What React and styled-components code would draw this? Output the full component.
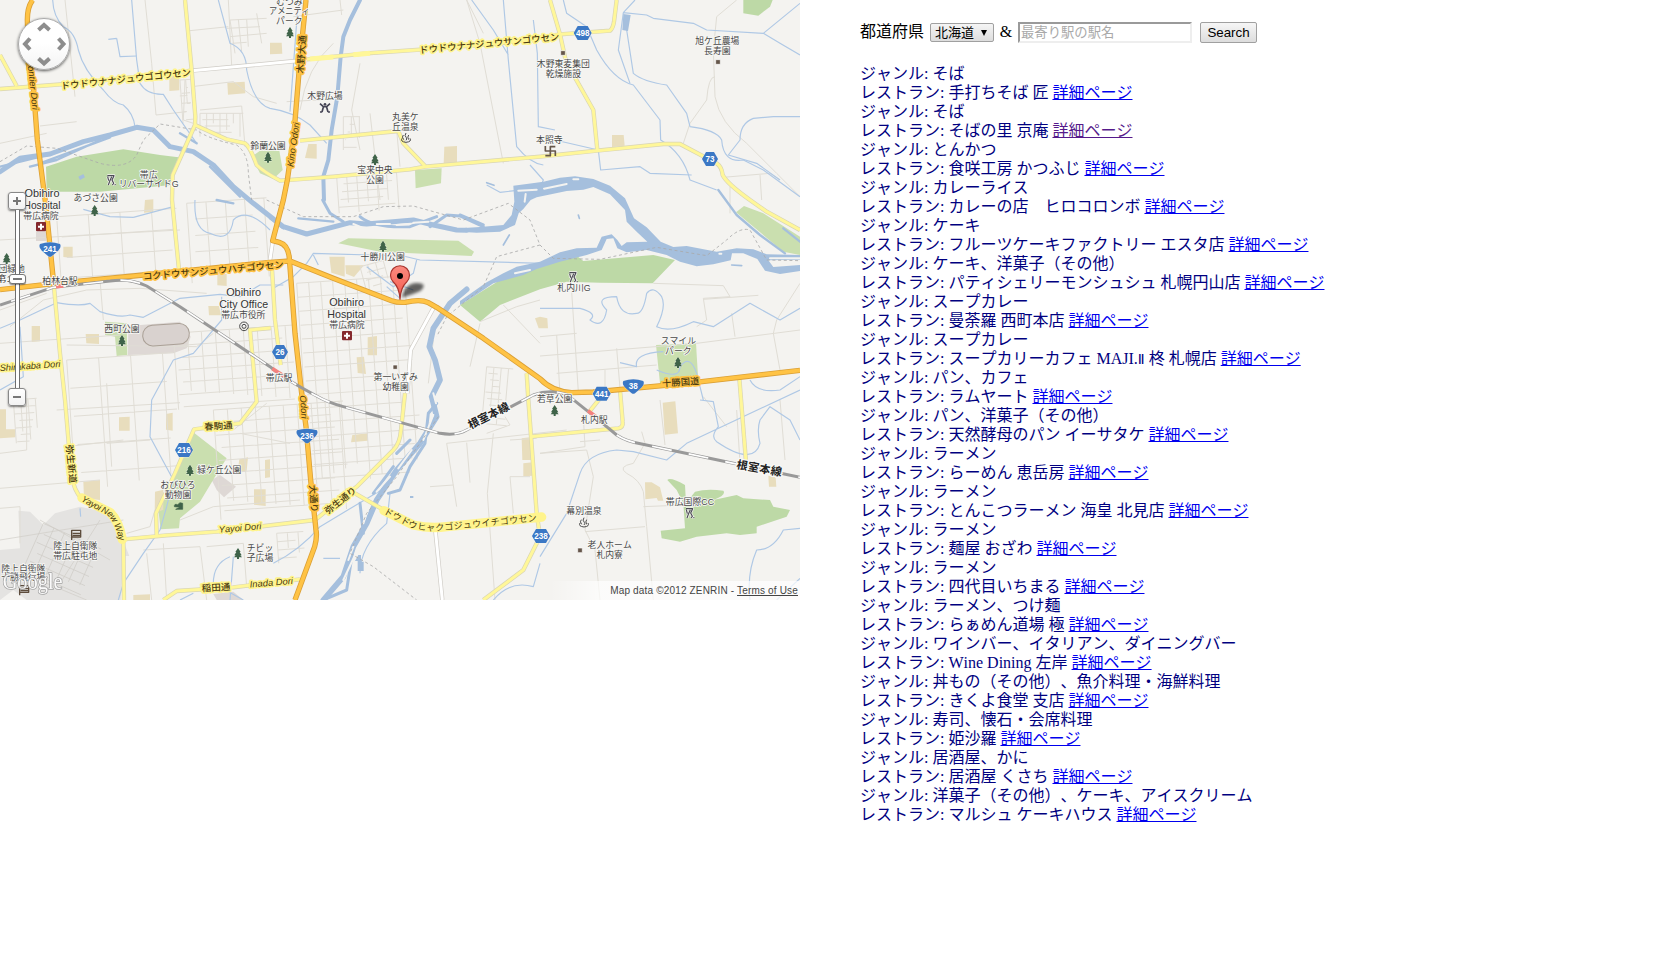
import React from "react";
import styled, { createGlobalStyle } from "styled-components";

const GlobalStyle = createGlobalStyle`
  body { margin: 0; background: #fff; }
`;
const Page = styled.main`
  display: flex;
  align-items: flex-start;
  gap: 60px;
  font: 16px/19px "Liberation Serif", "Noto Sans CJK JP", serif;
  font-kerning: none;
  text-spacing-trim: space-all;
  color: #000;
`;
const MapPane = styled.section`
  position: relative;
  flex: none;
  width: 800px;
  height: 600px;
  overflow: hidden;
  background: #f4f3f0;
`;
const MapSvg = styled.svg`
  display: block;
  font-family: "Liberation Sans", "Noto Sans CJK JP", sans-serif;
`;
const PanControl = styled.div`
  position: absolute;
  left: 18px;
  top: 18px;
  width: 50px;
  height: 50px;
  border: 1px solid #aaa;
  border-radius: 50%;
  background: linear-gradient(#fff 50%, #f3f3f3);
  box-shadow: 0 1px 3px rgba(0, 0, 0, 0.65);
`;
const ZoomControl = styled.div`
  position: absolute;
  left: 8px;
  top: 192px;
  display: flex;
  flex-direction: column;
  align-items: center;
  width: 18px;
`;
const ZoomButton = styled.div`
  display: grid;
  place-items: center;
  box-sizing: border-box;
  width: 18px;
  height: 18px;
  border: 1px solid #888;
  border-radius: 3px;
  background: linear-gradient(#fff, #f2f2f2);
  box-shadow: 0 1px 2px rgba(0, 0, 0, 0.5);
`;
const ZoomTrack = styled.div`
  display: flex;
  justify-content: center;
  box-sizing: border-box;
  width: 5px;
  height: 178px;
  padding-top: 64px;
  border: solid #6e6e6e;
  border-width: 0 1px;
  background: #fff;
`;
const ZoomHandle = styled.div`
  flex: none;
  display: grid;
  place-items: center;
  box-sizing: border-box;
  width: 17px;
  height: 10px;
  border: 1px solid #777;
  border-radius: 3px;
  background: #fff;
  box-shadow: 0 1px 1px rgba(0, 0, 0, 0.4);
`;
const Attribution = styled.div`
  position: absolute;
  right: 0;
  bottom: 0;
  box-sizing: border-box;
  width: 250px;
  height: 19px;
  padding-right: 2px;
  text-align: right;
  white-space: nowrap;
  font: 10px/19px "Liberation Sans", sans-serif;
  letter-spacing: 0.17px;
  color: #444;
  background: linear-gradient(to right, rgba(255, 255, 255, 0), rgba(255, 255, 255, 0.7) 50px);
`;
const Terms = styled.a`
  color: #444;
  text-decoration: underline;
`;
const Panel = styled.section`
  padding-top: 22px;
`;
const SearchBar = styled.form`
  display: flex;
  align-items: center;
  height: 21px;
  margin-bottom: 21px;
`;
const FieldName = styled.span`
  width: 70px;
  padding-bottom: 2px;
`;
const Prefecture = styled.button`
  display: flex;
  align-items: center;
  justify-content: space-between;
  box-sizing: border-box;
  width: 64px;
  height: 19px;
  padding: 0 6px 0 4px;
  border: 1px solid #a0a0a0;
  border-radius: 2px;
  background: linear-gradient(#f5f5f5, #ddd);
  font: 13px/17px "Liberation Sans", "Noto Sans CJK JP", sans-serif;
  color: #000;
`;
const Amp = styled.span`
  width: 24px;
  padding-bottom: 2px;
  text-align: center;
`;
const StationInput = styled.input`
  box-sizing: border-box;
  width: 174px;
  height: 21px;
  margin: 0 8px 0 0;
  padding: 1px;
  border: 2px solid;
  border-color: #9a9a9a #eee #eee #9a9a9a;
  outline: none;
  background: #fff;
  font: 13.33px "Liberation Sans", "Noto Sans CJK JP", sans-serif;
  &::placeholder { color: #a9a9a9; opacity: 1; }
`;
const SearchButton = styled.button`
  box-sizing: border-box;
  width: 57px;
  height: 21px;
  padding: 0;
  border: 1px solid #a0a0a0;
  border-radius: 2px;
  background: linear-gradient(#f6f6f6, #ddd);
  font: 13.33px "Liberation Sans", sans-serif;
  color: #000;
`;
const Results = styled.div`
  color: #000080;
`;
const Line = styled.div`
  height: 19px;
  white-space: pre;
`;
const Numeral = styled.span`
  font: 14px/1 "DejaVu Sans", sans-serif;
`;
const Detail = styled.a`
  color: ${(p) => (p.$visited ? "#551a8b" : "#0000ee")};
  text-decoration: underline;
`;

const restaurants = [
  ["そば", "手打ちそば 匠"],
  ["そば", "そばの里 京庵", true],
  ["とんかつ", "食咲工房 かつふじ"],
  ["カレーライス", "カレーの店　ヒロコロンボ"],
  ["ケーキ", "フルーツケーキファクトリー エスタ店"],
  ["ケーキ、洋菓子（その他）", "パティシェリーモンシュシュ 札幌円山店"],
  ["スープカレー", "曼荼羅 西町本店"],
  ["スープカレー", <>スープカリーカフェ MAJI.<Numeral>Ⅱ</Numeral> 柊 札幌店</>],
  ["パン、カフェ", "ラムヤート"],
  ["パン、洋菓子（その他）", "天然酵母のパン イーサタケ"],
  ["ラーメン", "らーめん 恵岳房"],
  ["ラーメン", "とんこつラーメン 海皇 北見店"],
  ["ラーメン", "麺屋 おざわ"],
  ["ラーメン", "四代目いちまる"],
  ["ラーメン、つけ麺", "らぁめん道場 極"],
  ["ワインバー、イタリアン、ダイニングバー", "Wine Dining 左岸"],
  ["丼もの（その他）、魚介料理・海鮮料理", "きくよ食堂 支店"],
  ["寿司、懐石・会席料理", "姫沙羅"],
  ["居酒屋、かに", "居酒屋 くさち"],
  ["洋菓子（その他）、ケーキ、アイスクリーム", "マルシュ ケーキハウス"],
];

/* Map geometry is kept in thirds of a pixel: 2400 x 1800 units. */
const motorways = [
  "M98 0Q82 20 82 60L86 200L100 260L112 420L138 620L150 740L161 850",
  "M0 869L160 851L400 828L810 787L870 783L1000 835L1175 902Q1192 908 1215 907Q1262 896 1285 908L1310 922L1450 1015L1620 1136Q1655 1174 1715 1178L1780 1176L2060 1150L2400 1111",
  "M918 0L900 180L882 400L862 540L850 600L818 722L838 727Q865 735 868 775L885 1000L905 1180L918 1280L932 1440L948 1590Q952 1610 944 1640L885 1800",
];
const yellowRoads = [
  "M555 0L575 210L586 350L585 375L518 525L516 600L537 810",
  "M0 267L250 248L575 212",
  "M920 178L980 172L1100 160L1260 149L1500 130L1680 103L1750 98L1830 92Q1839 85 1842 65L1850 0",
  "M1650 0L1680 103L1698 185L1780 330L1792 450",
  "M900 422L1195 393L1210 430L1275 498",
  "M585 375L680 418L735 430Q750 440 770 495Q790 515 840 542L1000 530L1230 508L1275 500L1620 470L1790 452L1990 432L2040 432L2150 490Q2165 500 2168 525Q2180 550 2250 600L2300 635L2400 690",
  "M0 165L50 258",
  "M815 790L825 960L842 1095",
  "M812 984L750 990L770 1205L720 1270L582 1288L525 1420L468 1540L470 1605",
  "M161 850L180 1060L195 1200L207 1340L220 1450Q230 1485 255 1505L345 1545L370 1618L372 1800",
  "M370 1618L500 1606L650 1595L945 1560L1070 1460L1180 1350Q1200 1330 1203 1290L1215 1180",
  "M1065 1480L1160 1535L1240 1577L1310 1582L1450 1572L1620 1550",
  "M1580 1120L1585 1200L1610 1540L1620 1610L1570 1710L1450 1800",
  "M1590 1310L1855 1285Q1870 1282 1868 1265L1860 1170",
  "M2218 1135L2238 1385",
  "M490 1800L530 1773L700 1762L900 1738",
  "M0 1108L180 1090",
  "M1800 1195L1768 1235",
];
const streets = [
  "M195 0L220 240L225 290M435 0L455 190L468 345L560 335M570 92L685 80M685 0L695 195M575 260L700 245L760 290L830 310",
  "M0 430L140 400M120 378L230 365M555 240L550 360L580 370M545 280L570 278M545 310L573 308M725 318L735 440M600 330L725 318",
  "M690 60L800 55M680 85L780 80M690 110L800 100M695 130L740 127M690 60L705 160M715 58L725 155M740 58L745 140M770 40L785 130",
  "M1030 30L880 50M1025 45L1020 0M1400 0L1450 100M1400 0L1440 130L1510 490M1190 390L1200 500M1110 340L1140 600M1080 190L1055 330L1080 450M860 305L990 298M1000 130Q920 200 900 330",
  "M2210 0L2150 50L2140 150L2145 290Q2160 370 2240 430L2330 520L2400 590M2145 230Q2125 230 2120 300L2070 370L2050 430M2170 532L2310 520L2340 540M2280 525L2285 600",
  "M950 1500L940 1600M1285 1150L1300 1020M1460 1300L1530 1275L1515 1250M1485 1800L1462 1480L1480 1300M1370 1520L1340 1330L1700 1290M1400 1328L1410 1448M1290 1460L1360 1455",
  "M1530 1320L1610 1315M1540 1540L1530 1430L1590 1430M1620 1360L1760 1350L1780 1430L1755 1590L1785 1650L1800 1800M1750 1250L1755 1340L1620 1360M1740 1325L1800 1320M1755 1595L1935 1580",
  "M1925 1295L1935 1330L1900 1390Q1850 1400 1880 1420Q1920 1440 1930 1475L1940 1580L1960 1800M1930 1520L2050 1515M1980 1200L1995 1335M2110 1190L2180 1280",
  "M1620 1010L1730 1000M1670 1005L1680 1185M1620 1068L2090 1030L2400 990M1670 1120L1970 1095M1715 875L1735 1175M1850 1045L1860 1165M1815 1110L1815 1170",
  "M1960 850L2170 857L2190 890L2110 895L2120 960L2090 980M2110 898L2275 886M2400 850L2330 960L2320 1000L2340 1110M2195 940L2205 1010",
  "M1440 965L1550 920L1620 900M1440 970L1410 1100M1510 915L1620 1030",
  "M0 1360L80 1350L80 1200M0 1465L300 1440M0 1525L60 1520L60 1630M2340 1200L2355 1380M2210 1230L2220 1390M2190 640L2190 560",
  "M30 980L130 900L260 870L420 865L620 880M0 930L140 880M0 1030L360 1005M300 840L310 960M200 1035L590 1040L640 1000",
  "M0 720L260 705L540 690M170 1230L540 1208M200 1340L370 1320M320 1150L335 1400M320 1330L450 1320M700 1290L800 1210M720 1300L870 1330",
  "M440 1660L455 1800M430 1650L600 1640L620 1800M620 1640L730 1630L740 1760M490 1630L500 1800M380 1600L450 1580L465 1530M540 1560L640 1520L900 1500",
];
const streams = [
  "M158 0Q160 50 190 80Q225 95 235 150Q250 210 310 270Q340 310 370 315Q400 340 405 380",
  "M395 0L410 180L420 250Q440 285 490 283L520 330L590 430",
  "M655 0L690 130Q740 150 740 210Q760 310 810 325Q880 335 930 375L980 430",
  "M350 115L360 170L410 168M350 115L325 118",
  "M895 0L870 335",
  "M1415 0L1480 90L1525 165M1510 0L1525 180L1550 440Q1590 490 1630 495M1600 60L1612 160L1615 380L1665 390",
  "M1690 0L1700 40L1760 80L1790 150Q1840 240 1900 255L1980 360L1982 420Q2050 460 2070 540L2150 570",
  "M1880 90L1900 220Q1930 245 2000 255L2060 340L2070 380Q2150 390 2165 420Q2170 490 2230 480L2290 510L2400 590",
  "M1870 38L1940 45L1960 55L2080 70L2120 90L2290 100L2400 10M2290 100L2340 130L2400 165M1870 38L1855 150L1890 250M1870 38L1905 0",
  "M2400 350L2320 350L2260 355Q2220 370 2220 420L2185 465L2270 490L2340 540M1665 420L1795 450L1802 510L1920 500L1950 520L2075 525",
  "M585 600Q580 690 630 700Q690 730 700 660Q740 620 810 690M400 652L330 650L250 628M520 620L400 652",
  "M0 985L60 960L170 908Q240 920 270 910L300 935Q360 955 390 945L430 952L540 895L660 883L720 890L780 855L850 855M60 980L70 1130L0 1170",
  "M665 890L665 960L580 1060L520 1080L455 1200L450 1310L520 1440L500 1520L480 1590L430 1660L370 1750L355 1800",
  "M730 1800L640 1750Q640 1690 690 1670M700 1670L690 1800M820 1690Q900 1650 960 1580L1110 1490L1160 1460",
  "M820 865L880 830L920 790L940 760L1210 768L1260 780L1630 790M940 765L955 795M1170 845L1240 870M1250 780L1240 820L1180 860L1100 800M1160 860L1200 895",
  "M1620 925L1740 925Q1795 940 1770 960Q1810 990 1820 930Q1780 890 1850 890Q1860 950 1910 940Q1930 940 1940 880Q1960 855 1985 890Q2000 920 1970 980Q2010 1000 2080 965L2140 980L2250 910L2340 960L2400 925",
  "M1860 1088L1910 1100Q1900 1060 1990 1055M1970 1110Q2040 1140 2040 1100Q2070 1060 2090 1120L2110 1200M2250 1140Q2270 1180 2340 1170L2400 1130",
  "M1620 1670L1700 1540L1740 1420Q1760 1360 1850 1350L1900 1355L2000 1380L2060 1330L2400 1170M2100 1200L2140 1205L2155 1280Q2130 1310 2150 1325Q2260 1400 2280 1330Q2270 1290 2280 1260L2310 1220L2370 1260L2400 1320",
  "M2400 1585L2350 1590Q2320 1650 2270 1650Q2240 1720 2250 1800M2400 1735L2330 1800M1620 1690L1600 1760Q1530 1740 1480 1800",
  "M1170 1480L1160 1570Q1080 1640 1080 1720M970 1675L1020 1675M540 1800L580 1780M240 1525L242 1550",
  "M1590 495L1630 540L1622 560M1460 555L1500 577L1545 572",
];
const rivers = [
  ["M0 515L60 475L150 462L250 425L330 405L410 382L460 390L510 440L580 455L640 495L700 560L760 610L850 680L920 702L1050 668L1100 672L1240 660L1300 675L1370 690L1400 691", 15],
  ["M0 500L140 465M90 500L170 480L300 420M120 490L330 412M630 500L720 590M540 400L590 430M650 600L700 610M810 655L850 685M895 655L1000 665", 7],
  ["M1080 0L1050 60L1030 110L1022 170L1012 290L995 390L985 480L970 530L972 600", 12],
  ["M1400 868L1350 910L1300 985L1288 1040L1305 1080L1320 1140L1295 1190L1310 1250L1260 1330L1190 1410L1130 1500L1100 1570L1060 1640L1030 1730L970 1800", 17],
  ["M1310 1210L1285 1240L1275 1330L1230 1400L1200 1470L1165 1480M1230 1320L1190 1360M1080 1510L1090 1600M1060 1640L1040 1770L970 1800M1180 1400L1120 1480", 9],
  ["M1080 650Q1120 685 1230 680L1310 650M1290 680L1340 645L1380 648L1450 680M968 600L990 640L1030 665M1380 645L1450 675", 9],
  ["M2155 570L2210 645L2280 705L2355 760M2350 685L2400 725", 7],
  ["M1460 548L1482 556M2195 795L2225 797M1735 645L1738 655M1510 735L1528 705", 5],
];
const braid = "M160 62L200 57L250 50L300 38L345 34L400 42L450 62L495 100L522 160L560 187L602 230L640 246L680 243L770 260L830 250L880 253L920 268L1022 270V284L925 286L940 306L1022 300V318L960 327L915 317L892 282L850 265H816L812 286L760 298L710 304L660 290L620 270L560 255L500 262L472 250L460 220L440 222L425 255L380 270L300 290L230 312L190 330L100 355L40 395L0 420V408L80 352L130 325L170 305L240 290L300 262L350 250L410 248L425 215L455 208L472 225L485 243L500 232L562 230L530 200L500 170L495 135L450 88L400 66L370 74L320 78L230 97L212 105L190 132L176 145L165 180L120 200L50 203L0 200V190L60 186L130 180L155 150L163 110Z";
const islands = "M1130 672L1170 672M1190 675L1230 672M1240 668L1285 665M1060 672L1085 682M1300 1245L1270 1320M1235 1350L1195 1405M1170 1430L1130 1475M1110 1510L1090 1570M1060 1640L1045 1680M2158 761L2164 761M1300 1180L1308 1210M1065 1665L1030 1740M1632 566L1700 552M1577 582L1574 605M1720 538L1735 538M1545 820L1590 810M2310 775L2400 775M1555 572L1610 569";

const greens = [
  ["M138 500L230 470L370 448L480 465L535 472L512 530L515 555L300 575L140 575Z", 0],
  ["M755 470L780 452L838 452L848 510L820 537L780 520Z", 1],
  ["M1245 510L1325 505L1323 550L1247 565Z", 1],
  ["M2230 0L2318 0L2310 20L2275 47L2230 40Z", 0],
  ["M1015 730L1045 715L1375 722L1422 755L1415 768L1140 755Z", 1],
  ["M1380 915L1500 840L1620 800L1730 767L1750 783L1960 765L2025 780L1958 850L1800 848L1700 845L1620 868L1500 915L1440 965Z", 0],
  ["M1968 1035L2088 1030L2095 1145L1980 1150Z", 1],
  ["M2208 637L2232 618L2290 640L2400 710L2400 765L2350 755Z", 1],
  ["M580 1297L680 1375L645 1430L600 1505L540 1555L537 1585L482 1588L475 1530Z", 1],
  ["M315 965L380 970L382 1065L350 1068L345 1010L315 1005Z", 1],
  ["M2002 1440Q2010 1430 2055 1455L2058 1510L2085 1475Q2120 1465 2170 1472Q2180 1485 2140 1500L2210 1485L2230 1495L2310 1500L2320 1520L2370 1530L2360 1550L2270 1580L2270 1600L2220 1605L2180 1600L2090 1610L2040 1625L1985 1615L1982 1592L2055 1585L2050 1510L2030 1470Z", 0],
];
const tanBlocks = [
  "M508 228l30 -2l0 45l-30 2z", "M682 248l52 -3l2 35l-52 4z", "M810 128l35 0l2 33l-37 2z", "M925 432l25 0l0 44l-35 -2z",
  "M1333 440l38 -2l0 50l-40 2z", "M1836 405l35 0l3 32l-38 4z", "M190 740l28 0l0 34l-28 -3z", "M435 600l25 -2l0 38l-28 2z", "M652 822l28 0l0 36l-28 -2z",
  "M625 918l32 0l6 28l-36 0z", "M95 978l25 0l0 46l-25 2z", "M257 1002l40 0l0 30l-38 -2z", "M988 770l46 0l0 60l-40 -12z", "M1036 796l56 0l-30 35l-24 -10z",
  "M1103 1012l28 -4l0 58l-28 0z", "M1070 1072l22 -2l6 52l-25 -3z", "M1605 955l15 -5l22 5l2 30l-28 0z", "M0 1228l18 0l0 60l28 0l0 24l-46 3z",
  "M357 1252l32 -2l0 42l-32 0z", "M498 1242l20 -4l0 54l-20 -3z", "M250 1445l50 -5l0 60l-48 -5z", "M465 1475l25 -6l0 60l-26 10z", "M718 1378l26 -6l-4 40l-28 8z",
  "M762 1468l35 0l0 50l-35 -4z", "M1057 1305l46 -5l0 22l-50 5z", "M1565 1315l25 -3l5 68l-28 0z", "M1570 1390l28 -3l2 40l-30 2z", "M1988 1208l38 -4l8 96l-40 4z",
  "M1935 1447l20 0l25 15l10 40l-16 0l-4 -8l-34 4z", "M2305 1427l22 5l2 28l-22 0z", "M400 1785l50 -2l0 17l-50 0z", "M795 1380l15 -2l0 54l-15 2z",
];

const roadNames = [
  ["ドウドウナナジュウゴゴウセン", 378, 238, -6, 392, "y"],
  ["ドウドウナナジュウサンゴウセン", 1468, 131, -5.5, 422, "y"],
  ["コクドウサンジュウハチゴウセン", 640, 812, -5, 424, "o"],
  ["木野大通", 905, 163, -86, 116, "o"],
  ["Kino Odori", 880, 434, -82, 135, "oi"],
  ["Frontier Dori", 98, 250, 84, 160, "oi"],
  ["Odori", 911, 1221, 86, 70, "oi"],
  ["大通り", 940, 1496, 85, 82, "o"],
  ["弥生新道", 213, 1392, 84, 116, "y"],
  ["弥生通り", 1022, 1502, -38, 112, "y"],
  ["春駒通", 655, 1279, -3, 86, "y"],
  ["Shirakaba Dori", 90, 1098, -4, 182, "yi"],
  ["Yayoi Dori", 720, 1584, -5, 128, "yi"],
  ["稲田通", 648, 1763, -3, 86, "y"],
  ["Inada Dori", 814, 1748, -5, 130, "yi"],
  ["十勝国道", 2042, 1147, -4, 112, "o"],
];
const places = [
  ["むつみ", 868, 6], ["アメニティ", 868, 34, 122], ["パーク", 868, 62],
  ["鈴蘭公園", 804, 437], ["木野広場", 975, 288], ["丸美ケ", 1216, 351], ["丘温泉", 1216, 381],
  ["宝来中央", 1125, 510], ["公園", 1125, 540], ["木野東麦集団", 1690, 191], ["乾燥施設", 1690, 221],
  ["旭ケ丘農場", 2152, 123], ["長寿園", 2152, 153], ["本照寺", 1648, 420], ["帯広", 446, 524],
  ["リバーサイドG", 446, 551, 180], ["あづさ公園", 287, 594], ["帯広病院", 123, 648],
  ["団緑地", 35, 808], ["第1", 12, 838], ["柏林台駅", 180, 843], ["帯広市役所", 730, 944],
  ["西町公園", 366, 987], ["十勝川公園", 1148, 771], ["帯広病院", 1041, 974], ["帯広駅", 837, 1133],
  ["第一いずみ", 1187, 1132], ["幼稚園", 1187, 1161], ["札内川G", 1722, 864, 100], ["スマイル", 2035, 1022],
  ["パーク", 2035, 1052], ["若草公園", 1664, 1198], ["札内駅", 1783, 1260], ["緑ケ丘公園", 658, 1411],
  ["おびひろ", 534, 1455], ["動物園", 534, 1485], ["陸上自衛隊", 226, 1638], ["帯広駐屯地", 226, 1668],
  ["陸上自衛隊", 70, 1707], ["十勝飛行場", 70, 1732], ["チビッ", 780, 1645], ["子広場", 780, 1674],
  ["幕別温泉", 1752, 1533], ["老人ホーム", 1829, 1635], ["札内寮", 1829, 1664], ["帯広国際CC", 2070, 1506, 145],
];
const englishPlaces = [
  ["Obihiro", 126, 578, 105], ["Hospital", 126, 616, 111], ["Obihiro", 731, 877, 105],
  ["City Office", 731, 913, 147], ["Obihiro", 1040, 907, 105], ["Hospital", 1040, 943, 116],
];
const trees = [[870, 97], [804, 471], [1125, 478], [284, 631], [20, 775], [366, 1021], [1149, 738], [2034, 1087], [1664, 1231], [570, 1410], [714, 1660]];

const Tree = ({ x, y }) => (
  <path transform={`translate(${x} ${y})`} d="M0 -16L8 -4H5L11 6H7L12 12H3V17H-3V12H-12L-7 6H-11L-5 -4H-8Z" fill="#3f6349" stroke="#f4f3f0" strokeWidth="1.5" paintOrder="stroke" />
);
const Golf = ({ x, y }) => (
  <g transform={`translate(${x} ${y})`} fill="none" stroke="#f4f3f0" strokeWidth="8">
    <path d="M-12 -13H8L2 0L7 10L3 15M1 -10L-5 4L-9 15M10 14h3M-11 -10L-8 2" />
    <path d="M-12 -13H8L2 0L7 10L3 15M1 -10L-5 4L-9 15M10 14h3M-11 -10L-8 2" stroke="#4c4c55" strokeWidth="3.5" />
  </g>
);
const HotSpring = ({ x, y }) => (
  <g transform={`translate(${x} ${y})`} fill="none" stroke="#4c4c4c" strokeWidth="3">
    <path d="M-8 -8Q-14 -2 -7 6M0 -14Q-6 -6 1 0Q4 4 0 8M8 -8Q3 -2 8 6M-12 2Q-18 12 0 14Q18 12 12 2" />
  </g>
);
const Cross = ({ x, y }) => (
  <g transform={`translate(${x} ${y})`}>
    <rect x="-15" y="-14" width="30" height="28" rx="3" fill="#85292d" />
    <path d="M-9 0H9M0 -9V9" stroke="#fff" strokeWidth="6" />
  </g>
);
const Flag = ({ x, y }) => (
  <path transform={`translate(${x} ${y})`} d="M-13 16V-13H14V7H-13M-10 -4H12M-10 2H12" fill="none" stroke="#5d4c3c" strokeWidth="4" />
);
const Shield = ({ x, y, n, national }) => (
  <g transform={`translate(${x} ${y})`}>
    <path
      d={national ? "M-30 -16Q0 -26 30 -16Q36 -6 20 8L5 21Q0 24 -5 21L-20 8Q-36 -6 -30 -16Z" : n.length > 2 ? "M-15 -21H15L27 0L15 21H-15L-27 0Z" : "M-12 -21H12L24 0L12 21H-12L-24 0Z"}
      fill="#3b78c5" stroke="#f4f3f0" strokeWidth="2" paintOrder="stroke"
    />
    <text y="9" textAnchor="middle" fontSize="27" fontWeight="bold" fill="#fff" textLength={n.length * 13.5} lengthAdjust="spacingAndGlyphs">{n}</text>
  </g>
);

/* Regular blocks of the central town, slightly tilted west. */
function TownGrid({ x, y, w, h, dx, dy, angle = -4 }) {
  const d = [];
  for (let i = 0; i <= w; i += dx) d.push(`M${i} 0V${h - ((i * 7) % 60)}`);
  for (let j = 0; j <= h; j += dy) d.push(`M${(j * 3) % 25} ${j}H${w - ((j * 5) % 50)}`);
  return <path transform={`translate(${x} ${y}) rotate(${angle})`} d={d.join("")} />;
}

const railway = "M0 915L160 862L330 843Q390 834 440 858L540 920L810 1100Q850 1135 950 1188Q980 1206 1030 1220L1320 1300Q1370 1308 1400 1290L1600 1185Q1650 1166 1700 1183L1790 1255L1850 1305Q1880 1325 1925 1332L2200 1390L2400 1432";

function CityMap() {
  return (
    <MapSvg width="800" height="600" viewBox="0 0 2400 1800" strokeLinejoin="round">
      <defs>
        <path id="new-way" d="M242 1502Q290 1530 322 1545Q348 1572 358 1625" />
        <path id="hyaku" d="M1150 1540L1235 1584Q1290 1597 1340 1590L1450 1579L1630 1561" />
        <filter id="soft"><feGaussianBlur stdDeviation="5" /></filter>
        <linearGradient id="pin" x2="0" y2="1"><stop stopColor="#fb8b80" /><stop offset="1" stopColor="#f5594d" /></linearGradient>
      </defs>
      <path d="M55 1532L90 1535L130 1575L165 1540L240 1520L310 1535L345 1560L368 1618L388 1668H370L362 1800H0V1650L60 1645Z" fill="#e4e3e1" />
      <path d="M0 1800L40 1770L80 1800Z" fill="#f4f3f0" />
      <g fill="#ded8d5">
        <path d="M385 978L540 965L572 1010L560 1045L520 1060L384 1065Z" />
        <path d="M635 1440L660 1425L708 1460L672 1492L650 1470Z" /><path d="M108 695h30v28h-30z" />
        <path d="M640 1782L700 1775L730 1800H650Z" />
      </g>
      {greens.map(([d, light]) => <path key={d} d={d} fill={light ? "#cadfaf" : "#bdd9a6"} />)}
      <g fill="#e8ddbd">{tanBlocks.map((d) => <path key={d} d={d} />)}</g>
      <g fill="none" stroke="#e0ddd5" strokeWidth="3">
        {streets.map((d) => <path key={d} d={d} />)}
        <TownGrid x={890} y={850} w={340} h={600} dx={36} dy={42} />
        <TownGrid x={520} y={1000} w={360} h={230} dx={42} dy={37} />
        <TownGrid x={640} y={1230} w={390} h={330} dx={42} dy={38} />
        <TownGrid x={200} y={1080} w={320} h={400} dx={96} dy={85} />
        <TownGrid x={560} y={610} w={240} h={240} dx={58} dy={49} />
        <TownGrid x={170} y={650} w={360} h={200} dx={95} dy={62} />
        <TownGrid x={1460} y={1100} w={80} h={180} dx={22} dy={19} angle={5} />
        <TownGrid x={1010} y={530} w={180} h={110} dx={30} dy={23} />
        <TownGrid x={1030} y={350} w={50} h={100} dx={24} dy={23} angle={0} />
        <TownGrid x={600} y={340} w={130} h={70} dx={20} dy={19} angle={0} />
        <TownGrid x={540} y={240} w={36} h={130} dx={17} dy={24} />
        <TownGrid x={1080} y={800} w={80} h={80} dx={24} dy={22} angle={-15} />
        <TownGrid x={40} y={1200} w={70} h={130} dx={22} dy={21} />
        <TownGrid x={830} y={1600} w={80} h={90} dx={32} dy={25} />
      </g>
      <g fill="none" stroke="#cfccc6" strokeWidth="2">
        <TownGrid x={130} y={1570} w={190} h={150} dx={35} dy={30} angle={24} />
        <path d="M0 1620L370 1560M20 1700L260 1800M120 1560L330 1680M300 1560L180 1750" />
      </g>
      <rect x="428" y="973" width="140" height="62" rx="30" fill="#d9d2cf" stroke="#aaa096" strokeWidth="3" transform="rotate(-4 498 1004)" />
      <g fill="none" stroke="#afc8e5" strokeWidth="3.5">{streams.map((d) => <path key={d} d={d} />)}</g>
      <g fill="none" stroke="#a5bfdd" strokeLinecap="round">
        {rivers.map(([d, w]) => <path key={d} d={d} strokeWidth={w} />)}
      </g>
      <path d={braid} transform="translate(1380 495)" fill="#a5bfdd" />
      <path d={islands} fill="none" stroke="#f4f3f0" strokeWidth="6" strokeLinecap="round" />
      <path d="M1870 42L1892 45L1884 93L1867 90ZM235 530L250 522L255 532L240 540ZM1075 1665h8v20h8v28h-18v-30h-8zM1230 1488h10v6h-10z" fill="#a5bfdd" />
      <path d="M0 485L80 438L170 445L300 490Q380 510 410 465L430 420L480 372L590 390Q620 415 710 435Q745 460 745 520L755 600M800 600L910 650L1060 650L1150 620L1240 618L1390 660L1525 610L1590 660L1620 735L1660 775L1800 778L1970 742L2120 767L2180 720Q2220 680 2250 690L2300 780L2400 782M1620 735L1490 770L1450 860L1340 950L1310 1010M1315 1250L1190 1430L1100 1540L1050 1660L1120 1700L1250 1800" fill="none" stroke="#aaa" strokeWidth="2.5" strokeDasharray="9 8" />
      <g fill="none">
        <g stroke="#cfccc6" strokeWidth="13"><path d="M575 212L920 180M1305 1580L1327 1800M1222 1180L1232 1050L1300 925M818 725L810 780" /></g>
        <g stroke="#fff" strokeWidth="9"><path d="M575 212L920 180M1305 1580L1327 1800M1222 1180L1232 1050L1300 925M818 725L810 780" /></g>
        <g stroke="#d9d5b4" strokeWidth="13">{yellowRoads.map((d) => <path key={d} d={d} />)}</g>
        <g stroke="#fff799" strokeWidth="9">{yellowRoads.map((d) => <path key={d} d={d} />)}</g>
        <path d="M930 177L1000 171M1060 164L1110 160" stroke="#fff799" strokeWidth="15" />
        <g stroke="#dba036" strokeWidth="16">{motorways.map((d) => <path key={d} d={d} />)}</g>
        <g stroke="#ffc345" strokeWidth="11">{motorways.map((d) => <path key={d} d={d} />)}</g>
      </g>
      <g fill="none">
        <path d={railway} stroke="#999" strokeWidth="9" />
        <path d={railway} stroke="#fff" strokeWidth="5" strokeDasharray="60 52" strokeDashoffset="-35" />
        <path d="M168 860L190 858M817 1106L852 1128M1764 1232L1788 1250" stroke="#f4827e" strokeWidth="11" />
      </g>
      <g textAnchor="middle" dominantBaseline="central" fontSize="27" fill="#4a3a10" strokeWidth="10">
        {roadNames.map(([t, x, y, a, len, kind]) => (
          <text key={t + x} transform={`translate(${x} ${y}) rotate(${a})`} textLength={len} lengthAdjust="spacingAndGlyphs" stroke={kind[0] === "o" ? "#ffc345" : "#fff48c"} paintOrder="stroke" fontStyle={kind[1] ? "italic" : "normal"} fontWeight={kind[1] ? 400 : 500}>{t}</text>
        ))}
      </g>
      <path d="M246 1494Q295 1520 330 1537Q357 1565 367 1618M1152 1532L1240 1575Q1290 1587 1340 1580L1450 1569L1625 1551" fill="none" stroke="#fff48c" strokeWidth="28" strokeLinecap="round" />
      <g fontSize="27" fill="#4a3a10">
        <text fontStyle="italic"><textPath href="#new-way" textLength="178">Yayoi New Way</textPath></text>
        <text><textPath href="#hyaku" textLength="474">ドウドウヒャクゴジュウイチゴウセン</textPath></text>
      </g>
      <g textAnchor="middle" dominantBaseline="central" fill="#484848" stroke="#f8f8f6" strokeWidth="5" paintOrder="stroke">
        {places.map(([t, x, y, len]) => <text key={t + x + y} x={x} y={y} fontSize="26.5" paintOrder="stroke" textLength={len || t.length * 26.5} lengthAdjust="spacingAndGlyphs">{t}</text>)}
        {englishPlaces.map(([t, x, y, len]) => <text key={t + x + y} x={x} y={y} fontSize="32" fill="#333" paintOrder="stroke" textLength={len} lengthAdjust="spacingAndGlyphs">{t}</text>)}
        <g fontSize="34" fontWeight="bold" fill="#222" strokeWidth="8">
          <text transform="translate(1466 1247) rotate(-27)" textLength="134" paintOrder="stroke">根室本線</text>
          <text transform="translate(2278 1405) rotate(10)" textLength="138" paintOrder="stroke">根室本線</text>
        </g>
      </g>
      {trees.map(([x, y]) => <Tree key={`${x}-${y}`} x={x} y={y} />)}
      <Golf x={334} y={540} /><Golf x={1720} y={831} /><Golf x={2070} y={1539} />
      <HotSpring x={1218} y={413} /><HotSpring x={1752} y={1567} />
      <Cross x={123} y={680} /><Cross x={1041} y={1007} />
      <Flag x={228} y={1604} /><Flag x={72} y={1770} />
      <g fill="#65564a" stroke="#fff" strokeWidth="2"><path d="M1682 152h14v14h-14zM2147 179h14v14h-14zM1179 1095h13v13h-13zM1733 1644h14v14h-14z" /></g>
      <path d="M1636 467H1651V440H1666M1636 438V453H1666V468" fill="none" stroke="#65564a" strokeWidth="5" />
      <path d="M960 311L970 320H980L990 311M966 336L971 318M984 336L979 318M966 336H960M984 336H990" fill="none" stroke="#454555" strokeWidth="5" />
      <circle cx="975" cy="313" r="4" fill="#454555" />
      <g fill="none" stroke="#4c4c4c" strokeWidth="3"><circle cx="732" cy="979" r="13" /><circle cx="732" cy="979" r="6" /></g>
      <path d="M523 1520Q522 1510 533 1514L540 1508L548 1510V1528H527L540 1522Z" fill="#3f6349" stroke="#3f6349" strokeWidth="2" />
      <Shield x={1748} y={99} n="498" /><Shield x={2130} y={477} n="73" /><Shield x={150} y={748} n="241" national />
      <Shield x={840} y={1056} n="26" /><Shield x={1900} y={1159} n="38" national /><Shield x={1805} y={1181} n="441" />
      <Shield x={552} y={1350} n="216" /><Shield x={921} y={1307} n="236" national /><Shield x={1623} y={1608} n="238" />
      <path d="M1205 893Q1215 850 1250 849Q1285 850 1262 872Q1240 882 1205 893Z" fill="#000" opacity="0.6" filter="url(#soft)" />
      <path d="M1200 898Q1198 862 1180 846A28.500 28.500 0 1 1 1220 846Q1202 862 1200 898Z" fill="url(#pin)" stroke="#a8352e" strokeWidth="3.5" />
      <circle cx="1200" cy="828" r="9" fill="#000" />
      <text x="8" y="1767" fontFamily="Liberation Serif, serif" fontSize="70" textLength="180" lengthAdjust="spacingAndGlyphs" fill="#fff" stroke="#999" strokeWidth="5" paintOrder="stroke" opacity="0.85">Google</text>
    </MapSvg>
  );
}

export default function App() {
  return (
    <Page>
      <GlobalStyle />
      <MapPane>
        <CityMap />
        <PanControl>
          <svg width="50" height="50" viewBox="0 0 50 50" fill="none" stroke="#8d8d8d" strokeWidth="4">
            <path d="M19.500 11L25 6L30.500 11M19.500 39.500L25 44.500L30.500 39.500M11 19.500L6 25L11 30.500M39.500 19.500L44.500 25L39.500 30.500" />
          </svg>
        </PanControl>
        <ZoomControl>
          <ZoomButton><svg width="10" height="10"><path d="M1 5H9M5 1V9" stroke="#777" strokeWidth="2" /></svg></ZoomButton>
          <ZoomTrack><ZoomHandle><svg width="9" height="2"><path d="M0 1H9" stroke="#777" strokeWidth="2" /></svg></ZoomHandle></ZoomTrack>
          <ZoomButton><svg width="10" height="10"><path d="M1 5H9" stroke="#777" strokeWidth="2" /></svg></ZoomButton>
        </ZoomControl>
        <Attribution>Map data ©2012 ZENRIN - <Terms>Terms of Use</Terms></Attribution>
      </MapPane>
      <Panel>
        <SearchBar>
          <FieldName>都道府県</FieldName>
          <Prefecture type="button">
            <span>北海道</span>
            <svg width="6" height="6"><path d="M0 0H6L3 6Z" fill="#000" /></svg>
          </Prefecture>
          <Amp>&amp;</Amp>
          <StationInput placeholder="最寄り駅の駅名" />
          <SearchButton type="button">Search</SearchButton>
        </SearchBar>
        <Results>
          {restaurants.map(([genre, name, visited], i) => (
            <React.Fragment key={i}>
              <Line>ジャンル: {genre}</Line>
              <Line>レストラン: {name} <Detail $visited={visited}>詳細ページ</Detail></Line>
            </React.Fragment>
          ))}
        </Results>
      </Panel>
    </Page>
  );
}
